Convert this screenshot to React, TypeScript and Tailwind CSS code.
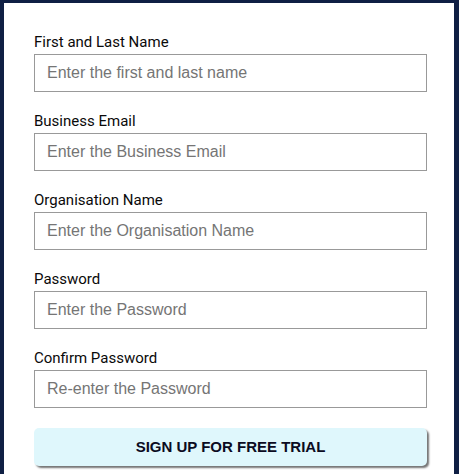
const fields = [
  { label: "First and Last Name", placeholder: "Enter the first and last name", type: "text" },
  { label: "Business Email", placeholder: "Enter the Business Email", type: "email" },
  { label: "Organisation Name", placeholder: "Enter the Organisation Name", type: "text" },
  { label: "Password", placeholder: "Enter the Password", type: "password" },
  { label: "Confirm Password", placeholder: "Re-enter the Password", type: "password" },
];

export default function App() {
  return (
    <div className="w-[459px] h-[474px] overflow-hidden bg-white border-l-4 border-t-[3px] border-r-[5px] border-[#0f1f44] pl-[30px] pt-[29px]">
      <form className="w-[393px] flex flex-col gap-[19px]">
        {fields.map((f) => (
          <div key={f.label} className="flex flex-col">
            <label className="text-[15px] leading-5 text-[#0a0a0a] mb-[2px] font-['Roboto',sans-serif]">
              {f.label}
            </label>
            <input
              type={f.type}
              placeholder={f.placeholder}
              className="h-[38px] w-full border border-[#999] px-3 text-[16px] font-['Liberation_Sans',Arial,sans-serif] placeholder:text-[#757575] outline-none"
            />
          </div>
        ))}
        <button
          type="button"
          className="mt-[1px] h-[38px] w-full rounded-[5px] bg-[#dff7fc] shadow-[2px_2px_2px_rgba(0,0,0,0.55)] text-[15px] font-bold text-[#0b0b22] font-['Liberation_Sans',Arial,sans-serif]"
        >
          SIGN UP FOR FREE TRIAL
        </button>
      </form>
    </div>
  );
}
